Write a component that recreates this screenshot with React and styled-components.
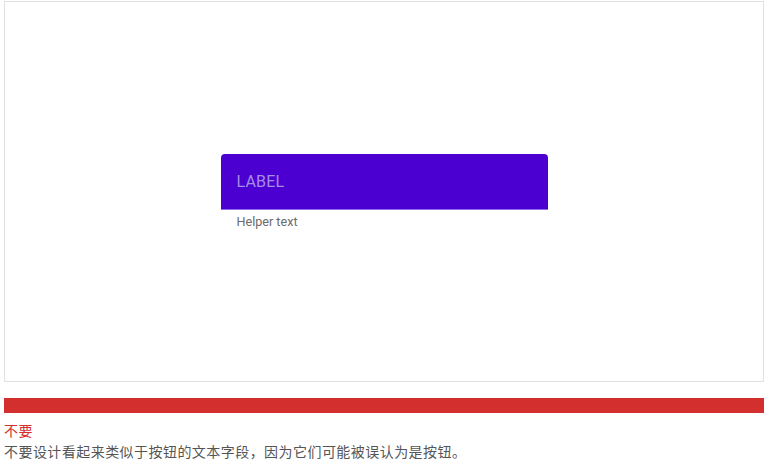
import React from "react";
import styled, { createGlobalStyle } from "styled-components";

const Global = createGlobalStyle`
  body {
    margin: 0;
    background: #fff;
    font-family: Roboto, "Noto Sans CJK SC", sans-serif;
  }
`;

const Page = styled.div`
  padding: 1px 3px 0 4px;
`;

const Frame = styled.div`
  height: 379px;
  box-sizing: content-box;
  border: 1px solid #e0e0e0;
  display: flex;
  align-items: center;
  justify-content: center;
`;

const Field = styled.div`
  width: 327px;
  display: flex;
  flex-direction: column;
  margin-top: 4px;
`;

const FilledBox = styled.div`
  height: 56px;
  background: #4b00d1;
  border-radius: 4px 4px 0 0;
  border-bottom: 1px solid #8a6cf0;
  display: flex;
  align-items: center;
  padding: 0 16px;
  box-sizing: border-box;
`;

const Label = styled.span`
  font-family: Roboto, sans-serif;
  font-size: 16px;
  color: #a58ce8;
  letter-spacing: 0.2px;
  padding-top: 1px;
`;

const Helper = styled.div`
  font-family: Roboto, sans-serif;
  font-size: 12.6px;
  color: #6b6b6b;
  padding: 4px 16px 0;
  line-height: 16px;
  height: 20px;
`;

const Bar = styled.div`
  height: 15px;
  margin-top: 16px;
  background: #d32f2f;
`;

const Caption = styled.div`
  font-family: "Noto Sans CJK SC", sans-serif;
  font-size: 14px;
  line-height: 21px;
  letter-spacing: 0.45px;
  color: ${(p) => (p.$tone === "bad" ? "#d32f2f" : "#555")};
`;

const Captions = styled.div`
  padding-top: 7px;
`;

export default function App() {
  return (
    <>
      <Global />
      <Page>
        <Frame>
          <Field>
            <FilledBox>
              <Label>LABEL</Label>
            </FilledBox>
            <Helper>Helper text</Helper>
          </Field>
        </Frame>
        <Bar />
        <Captions>
          <Caption $tone="bad">不要</Caption>
          <Caption>不要设计看起来类似于按钮的文本字段，因为它们可能被误认为是按钮。</Caption>
        </Captions>
      </Page>
    </>
  );
}
